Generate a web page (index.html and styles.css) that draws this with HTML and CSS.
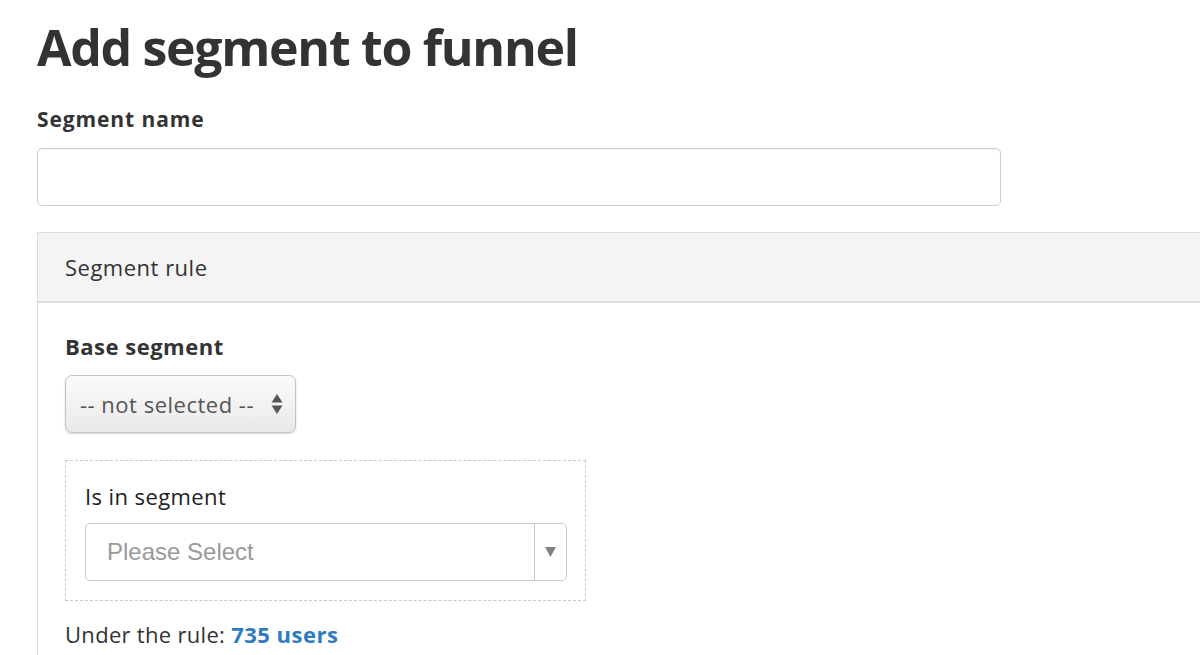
FILE: index.html
```html
<!DOCTYPE html>
<html>
<head>
<meta charset="utf-8">
<link rel="stylesheet" href="styles.css">
</head>
<body>
<div class="page">
  <h1 class="title">Add segment to funnel</h1>
  <label class="field-label">Segment name</label>
  <div class="text-input"></div>
  <div class="panel">
    <div class="panel-head">Segment rule</div>
    <div class="panel-body">
      <div class="field-label">Base segment</div>
      <div class="native-select">
        <span>-- not selected --</span>
        <svg class="updown" width="12" height="24" viewBox="0 0 12 24"><path d="M6 2 L11.5 10.5 L0.5 10.5 Z" fill="#555"/><path d="M0.5 13.5 L11.5 13.5 L6 22 Z" fill="#555"/></svg>
      </div>
      <div class="rule-box">
        <div class="rule-label">Is in segment</div>
        <div class="combo">
          <span class="placeholder">Please Select</span>
          <span class="combo-btn"><svg width="11" height="10" viewBox="0 0 11 10"><path d="M0 0 L11 0 L5.5 10 Z" fill="#808080"/></svg></span>
        </div>
      </div>
      <div class="summary">Under the rule: <a class="count">735 users</a></div>
    </div>
  </div>
</div>
</body>
</html>
```
FILE: styles.css
```css
html, body { margin: 0; padding: 0; overflow: hidden; background: #fff; }
body { font-family: "Open Sans", Lato, sans-serif; color: #333; }
.page { padding: 0 0 0 37px; width: 1300px; height: 655px; overflow: hidden; }
.title { font-size: 50px; font-weight: 700; margin: 0; padding-top: 18px; line-height: 58px; color: #333; letter-spacing: -1.3px; }
.field-label { display: block; font-size: 21px; font-weight: 700; line-height: 26px; margin: 30px 0 16px; color: #333; letter-spacing: 0.9px; }
.text-input { width: 962px; height: 56px; border: 1px solid #ccc; border-radius: 5px; box-shadow: inset 0 1px 1px rgba(0,0,0,0.05); }
.panel { margin-top: 26px; border: 1px solid #ddd; border-right: none; width: 1200px; }
.panel-head { background: #f4f4f4; border-bottom: 2px solid #ddd; height: 68px; display: flex; align-items: center; padding-left: 27px; font-size: 22px; color: #333; letter-spacing: 0.5px; }
.panel-body { padding: 28px 0 40px 27px; }
.panel-body .field-label { margin: 0 0 14px; line-height: 30px; font-size: 22px; letter-spacing: 0.5px; }
.native-select { height: 56px; border: 1px solid #c4c4c4; border-radius: 7px; background: linear-gradient(#fbfbfb, #e9e9e9); box-shadow: 0 1px 2px rgba(0,0,0,0.18), inset 0 1px 0 #fff; display: flex; align-items: center; justify-content: space-between; padding: 0 12px 0 14px; width: 203px; font-size: 22px; color: #555; letter-spacing: 0.5px; }
.rule-box { margin-top: 27px; width: 481px; border: 1px dashed #c8c8c8; padding: 20px 19px 19px 19px; }
.rule-label { font-size: 22px; line-height: 26px; color: #222; margin-top: 2px; letter-spacing: 0.4px; }
.combo { margin-top: 14px; height: 56px; width: 480px; border: 1px solid #ccc; border-radius: 5px; display: flex; align-items: center; }
.placeholder { flex: 1; padding-left: 21px; font-size: 24px; color: #999; font-family: "Liberation Sans", Arial, sans-serif; }
.combo-btn { width: 31px; height: 100%; border-left: 1px solid #ccc; display: flex; align-items: center; justify-content: center; }
.summary { margin-top: 18px; font-size: 22px; color: #333; letter-spacing: 0.3px; }
.count { color: #2f7bbf; font-weight: 700; letter-spacing: 0.5px; }
```
